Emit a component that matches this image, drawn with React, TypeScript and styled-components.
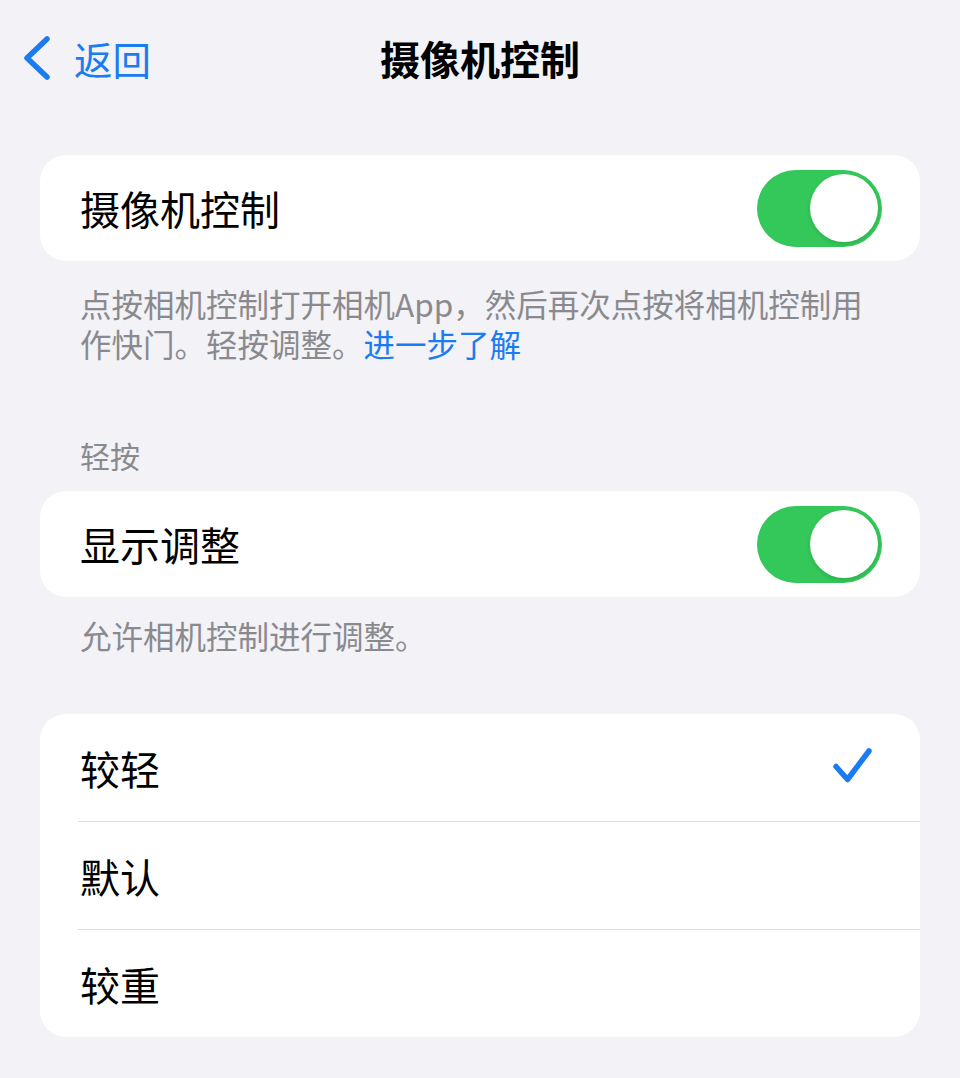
import React from 'react';
import styled, { createGlobalStyle } from 'styled-components';

const GlobalStyle = createGlobalStyle`
  html, body {
    margin: 0;
    padding: 0;
    background: #f2f2f7;
  }
  body {
    font-family: "Noto Sans CJK SC", "Noto Sans", "Liberation Sans", sans-serif;
    color: #000;
    -webkit-font-smoothing: antialiased;
  }
`;

const blue = '#1b7bf0';
const gray = '#8a8a8e';

const Page = styled.div`
  width: 960px;
  min-height: 1078px;
  display: flex;
  flex-direction: column;
`;

const NavBar = styled.header`
  height: 116px;
  display: grid;
  grid-template-columns: 1fr auto 1fr;
  align-items: center;
`;

const BackButton = styled.button`
  justify-self: start;
  display: flex;
  align-items: center;
  gap: 22px;
  padding: 0 0 0 22px;
  border: 0;
  background: none;
  color: ${blue};
  font: inherit;
  font-size: 38.5px;
  line-height: 48px;
  cursor: pointer;
`;

const Title = styled.h1`
  margin: 0;
  font-size: 40px;
  line-height: 48px;
  font-weight: 700;
`;

const Group = styled.section<{ $top: number }>`
  margin-top: ${p => p.$top}px;
`;

const SectionHeader = styled.div`
  padding: 0 80px 16px;
  font-size: 30px;
  line-height: 40px;
  color: ${gray};
`;

const Card = styled.div`
  margin: 0 40px;
  background: #fff;
  border-radius: 26px;
  overflow: hidden;
`;

const ToggleRow = styled.div`
  height: 106px;
  padding: 0 38px 0 40px;
  display: flex;
  align-items: center;
  justify-content: space-between;
`;

const Label = styled.span`
  font-size: 40px;
  line-height: 48px;
`;

const Switch = styled.span<{ $on: boolean }>`
  width: 125px;
  height: 77px;
  border-radius: 39px;
  background: ${p => (p.$on ? '#34c759' : '#e9e9eb')};
  display: flex;
  align-items: center;
  justify-content: ${p => (p.$on ? 'flex-end' : 'flex-start')};
  padding: 0 4px;
  box-sizing: border-box;
`;

const Knob = styled.span`
  width: 68px;
  height: 68px;
  border-radius: 50%;
  background: #fff;
  box-shadow: 0 2px 4px rgba(0, 0, 0, 0.12);
`;

const Footer = styled.p<{ $top: number }>`
  margin: 0;
  padding: ${p => p.$top}px 80px 0;
  font-size: 31.5px;
  line-height: 40px;
  color: ${gray};
`;

const Link = styled.span`
  color: ${blue};
`;

const OptionRow = styled.div`
  padding-left: 38px;
  display: flex;
`;

const OptionInner = styled.div<{ $first: boolean }>`
  flex: 1;
  height: 107px;
  padding: 0 46px 0 2px;
  display: flex;
  align-items: center;
  justify-content: space-between;
  border-top: ${p => (p.$first ? 'none' : '1.5px solid #dcdce0')};
`;

const Check = () => (
  <svg width="42" height="40" viewBox="0 0 42 40">
    <path
      d="M4 18.5 L15.5 31.5 L37 3"
      fill="none"
      stroke={blue}
      strokeWidth="5.5"
      strokeLinecap="round"
      strokeLinejoin="round"
    />
  </svg>
);

const Chevron = () => (
  <svg width="30" height="46" viewBox="0 0 30 46">
    <path
      d="M25 4 L5 23 L25 42"
      fill="none"
      stroke={blue}
      strokeWidth="5.5"
      strokeLinecap="round"
      strokeLinejoin="round"
    />
  </svg>
);

const levels = ['较轻', '默认', '较重'];

export default function App() {
  const selected = 0;
  return (
    <Page>
      <GlobalStyle />
      <NavBar>
        <BackButton>
          <Chevron />
          返回
        </BackButton>
        <Title>摄像机控制</Title>
        <span />
      </NavBar>

      <Group $top={39}>
        <Card>
          <ToggleRow>
            <Label>摄像机控制</Label>
            <Switch $on><Knob /></Switch>
          </ToggleRow>
        </Card>
        <Footer $top={22}>
          点按相机控制打开相机App，然后再次点按将相机控制用作快门。轻按调整。<Link>进一步了解</Link>
        </Footer>
      </Group>

      <Group $top={72}>
        <SectionHeader>轻按</SectionHeader>
        <Card>
          <ToggleRow>
            <Label>显示调整</Label>
            <Switch $on><Knob /></Switch>
          </ToggleRow>
        </Card>
        <Footer $top={18}>允许相机控制进行调整。</Footer>
      </Group>

      <Group $top={59}>
        <Card>
          {levels.map((name, i) => (
            <OptionRow key={name}>
              <OptionInner $first={i === 0}>
                <Label>{name}</Label>
                {i === selected && <Check />}
              </OptionInner>
            </OptionRow>
          ))}
        </Card>
      </Group>
    </Page>
  );
}
